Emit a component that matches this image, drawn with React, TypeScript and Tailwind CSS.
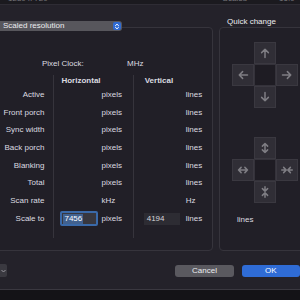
import React from "react";

const C = "#7f7e84";

function Icon({ d }: { d: string }) {
  return (
    <svg width="12" height="12" viewBox="0 0 16 16" fill="none" stroke={C} strokeWidth="2" strokeLinecap="round" strokeLinejoin="round">
      <path d={d} />
    </svg>
  );
}

const UP = "M8 14V3 M3.5 7.5L8 3l4.5 4.5";
const DOWN = "M8 2v11 M3.5 8.5L8 13l4.5-4.5";
const LEFT = "M14 8H3 M7.5 3.5L3 8l4.5 4.5";
const RIGHT = "M2 8h11 M8.5 3.5L13 8l-4.5 4.5";
const UPDOWN = "M8 2v12 M4.5 5.5L8 2l3.5 3.5 M4.5 10.5L8 14l3.5-3.5";
const LEFTRIGHT = "M2 8h12 M5.5 4.5L2 8l3.5 3.5 M10.5 4.5L14 8l-3.5 3.5";
const HIN = "M1 8h5 M3.5 4.5L7 8l-3.5 3.5 M15 8h-5 M12.5 4.5L9 8l3.5 3.5";
const VIN = "M8 1v5 M4.5 3.5L8 7l3.5-3.5 M8 15v-5 M4.5 12.5L8 9l3.5 3.5";

function Cell({ d, center }: { d?: string; center?: boolean }) {
  if (center)
    return <div className="w-[22px] h-[22px] bg-[#1e1c23] border border-[#34323a]" />;
  if (!d) return <div className="w-[22px] h-[22px]" />;
  return (
    <div className="w-[22px] h-[22px] bg-[#302e36] border border-[#3a3840] flex items-center justify-center">
      <Icon d={d} />
    </div>
  );
}

function Pad({ cells }: { cells: (string | null | "c")[] }) {
  return (
    <div className="grid grid-cols-[22px_22px_22px] grid-rows-[22px_22px_22px]">
      {cells.map((c, i) =>
        c === "c" ? <Cell key={i} center /> : <Cell key={i} d={c ?? undefined} />
      )}
    </div>
  );
}

const labels = ["Active", "Front porch", "Sync width", "Back porch", "Blanking", "Total", "Scan rate", "Scale to"];

export default function App() {
  const rowH = "h-[17.7px]";
  return (
    <div
      className="w-[300px] h-[300px] bg-[#24222a] overflow-hidden flex flex-col text-[8px] text-[#dcdbe0]"
      style={{ fontFamily: '"Liberation Sans", Arial, sans-serif' }}
    >
      {/* top strip */}
      <div className="h-[5px] shrink-0 bg-[#1b1a1f] border-b border-[#2e2c34] overflow-hidden">
        <div className="flex -mt-[6px] text-[#76757b] leading-[10px] text-[8px]">
          <span className="ml-[8px]">1280 x 720</span>
          <span className="ml-[175px]">Scaled</span>
          <span className="ml-[32px]">16:9</span>
        </div>
      </div>

      {/* main */}
      <div className="flex h-[246px] shrink-0">
        {/* left column */}
        <div className="flex flex-col pt-[16px] w-[213px] shrink-0">
          <div className="relative z-10 h-[10px] w-[122px] bg-[#57565c] rounded-r-[3px] flex items-center justify-between pl-[3px] pr-[1px]">
            <span className="text-[#ececef] leading-none">Scaled resolution</span>
            <div className="w-[8px] h-[8px] rounded-[2px] bg-[#2f6bd3] flex items-center justify-center">
              <svg width="6" height="7" viewBox="0 0 6 7" fill="none" stroke="#fff" strokeWidth="1" strokeLinecap="round" strokeLinejoin="round">
                <path d="M1.5 2.6L3 1.2l1.5 1.4 M1.5 4.4L3 5.8l1.5-1.4" />
              </svg>
            </div>
          </div>
          <div className="-mt-[4px] -ml-[10px] w-[223px] h-[224px] bg-[#211f27] border border-[#36343c] rounded-[4px] flex flex-col pt-[31px]">
            {/* pixel clock */}
            <div className="h-[10px] flex items-center leading-none">
              <span className="ml-[51px] w-[85px]">Pixel Clock:</span>
              <span>MHz</span>
            </div>
            {/* table */}
            <div className="mt-[6px] flex h-[163px]">
              <div className="w-[63px] pr-[9px] flex flex-col items-end">
                <div className="h-[11px]" />
                {labels.map((l) => (
                  <div key={l} className={`${rowH} flex items-center leading-none`}>
                    {l}
                  </div>
                ))}
              </div>
              <div className="w-[80px] border-l border-[#36343c] pl-[7px] flex flex-col">
                <div className="h-[11px] flex items-center font-bold leading-none">Horizontal</div>
                {labels.map((l, i) => (
                  <div key={l} className={`${rowH} flex items-center leading-none`}>
                    {i === 7 ? (
                      <div className="w-[38px] h-[15px] -ml-[1px] -mr-[1px] rounded-[2px] border-2 border-[#3a69a8] bg-[#38373e] flex items-center pl-[1px]">
                        <span className="bg-[#41618f] text-white px-[1px] leading-[10px]">7456</span>
                      </div>
                    ) : (
                      <div className="w-[36px]" />
                    )}
                    <span className="ml-[4px]">{i === 6 ? "kHz" : "pixels"}</span>
                  </div>
                ))}
              </div>
              <div className="w-[80px] border-l border-[#36343c] pl-[10px] flex flex-col">
                <div className="h-[11px] flex items-center font-bold leading-none pl-[1px]">Vertical</div>
                {labels.map((l, i) => (
                  <div key={l} className={`${rowH} flex items-center leading-none`}>
                    {i === 7 ? (
                      <div className="w-[36px] h-[12px] bg-[#2d2c33] flex items-center pl-[3px] text-[#d6d5da]">4194</div>
                    ) : (
                      <div className="w-[36px]" />
                    )}
                    <span className="ml-[6px]">{i === 6 ? "Hz" : "lines"}</span>
                  </div>
                ))}
              </div>
            </div>
          </div>
        </div>

        {/* right column */}
        <div className="flex flex-col pt-[12px] ml-[6px]">
          <div className="h-[10px] flex items-center leading-none pl-[8px] text-[#ececef]">Quick change</div>
          <div className="w-[95px] h-[224px] bg-[#211f27] border border-[#36343c] rounded-[4px] flex flex-col pl-[12px] pt-[14px]">
            <Pad cells={[null, UP, null, LEFT, "c", RIGHT, null, DOWN, null]} />
            <div className="mt-[29px]">
              <Pad cells={[null, UPDOWN, null, LEFTRIGHT, "c", HIN, null, VIN, null]} />
            </div>
            <div className="mt-[13px] pl-[5px] leading-none">lines</div>
          </div>
        </div>
      </div>

      {/* buttons */}
      <div className="h-[39px] shrink-0 flex items-start pt-[13px] border-b border-[#3a3840]">
        <div className="w-[9px] h-[13px] -ml-[1px] bg-[#3a3940] rounded-r-[2px] flex items-center justify-end pr-[1px]">
          <svg width="5" height="4" viewBox="0 0 5 4" fill="none" stroke="#9a99a0" strokeWidth="1">
            <path d="M0.5 1l2 2 2-2" />
          </svg>
        </div>
        <div className="ml-[168px] mt-[1px] w-[63px] h-[12px] rounded-[3px] bg-[#5a595f] flex items-center justify-center text-[#ececef] leading-none">
          Cancel
        </div>
        <div className="ml-[8px] mt-[1px] w-[63px] h-[12px] rounded-[3px] bg-[#2f6cd6] flex items-center justify-center text-white leading-none">
          OK
        </div>
      </div>
      <div className="flex-1 bg-[#141317]" />
    </div>
  );
}
